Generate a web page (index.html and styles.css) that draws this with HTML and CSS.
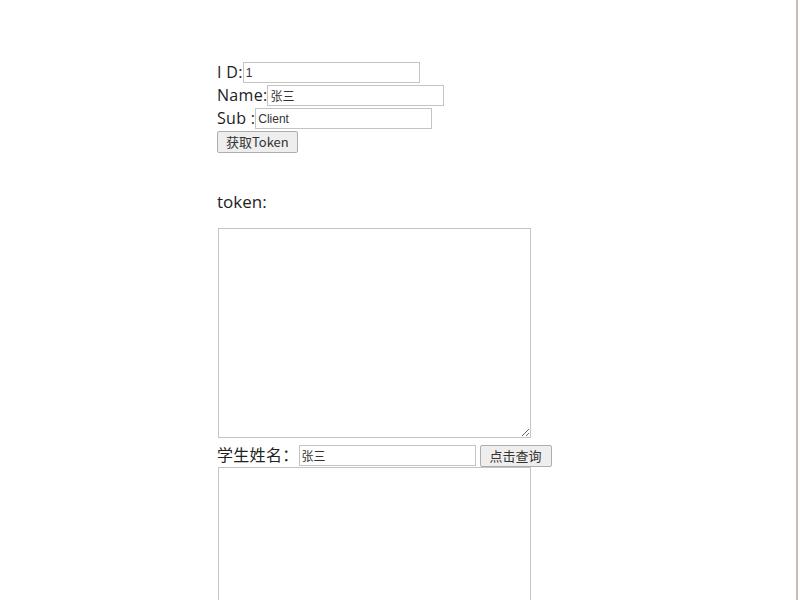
FILE: index.html
```html
<!DOCTYPE html>
<html>
<head>
<meta charset="utf-8">
<link rel="stylesheet" href="styles.css">
</head>
<body>
<div class="frame">
  <div class="content">
    <div class="row"><span class="lbl">I D:</span><input class="inp" type="text" value="1"></div>
    <div class="row"><span class="lbl">Name:</span><input class="inp" type="text" value="张三"></div>
    <div class="row"><span class="lbl">Sub :</span><input class="inp" type="text" value="Client"></div>
    <div class="row"><button class="btn">获取Token</button></div>
    <div class="token-label">token:</div>
    <textarea class="area"></textarea>
    <div class="row student"><span class="lbl">学生姓名：</span><input class="inp" type="text" value="张三"><button class="btn query">点击查询</button></div>
    <textarea class="area result"></textarea>
  </div>
</div>
</body>
</html>
```
FILE: styles.css
```css
html, body {
  margin: 0;
  padding: 0;
  background: #fff;
  overflow: hidden;
}
.frame {
  width: 798px;
  height: 600px;
  border-right: 2px solid #cbbcae;
  box-sizing: border-box;
  overflow: hidden;
}
.content {
  padding: 61px 0 0 217px;
  display: flex;
  flex-direction: column;
  align-items: flex-start;
  font-family: "Open Sans", "Noto Sans CJK SC", sans-serif;
  font-size: 16px;
  color: #222;
}
.row {
  display: flex;
  align-items: center;
  height: 23px;
}
.lbl {
  line-height: 23px;
  white-space: nowrap;
  letter-spacing: 0.3px;
}
.inp {
  box-sizing: border-box;
  width: 177px;
  height: 21px;
  border: 1px solid #c4c4c4;
  padding: 0 2px;
  margin: 0;
  font-family: "Liberation Sans", "Noto Sans CJK SC", sans-serif;
  font-size: 12px;
  color: #333;
  outline: none;
}
.btn {
  box-sizing: border-box;
  height: 22px;
  padding: 0 8px;
  margin: 0;
  border: 1px solid #adadad;
  border-radius: 2px;
  background: #eeeeee;
  font-family: "Noto Sans CJK SC", sans-serif;
  font-size: 13px;
  color: #333;
}
.token-label {
  margin-top: 37px;
  line-height: 23px;
  font-size: 17px;
}
.area {
  box-sizing: border-box;
  width: 313px;
  height: 210px;
  margin: 15px 0 0 1px;
  border: 1px solid #c4c4c4;
  resize: both;
  outline: none;
}
.student {
  margin-top: 6px;
  height: 23px;
}
.student .inp {
  width: 177px;
}
.query {
  margin-left: 4px;
  padding: 0 9px;
}
.area.result {
  margin-top: 0;
  height: 200px;
}
```
